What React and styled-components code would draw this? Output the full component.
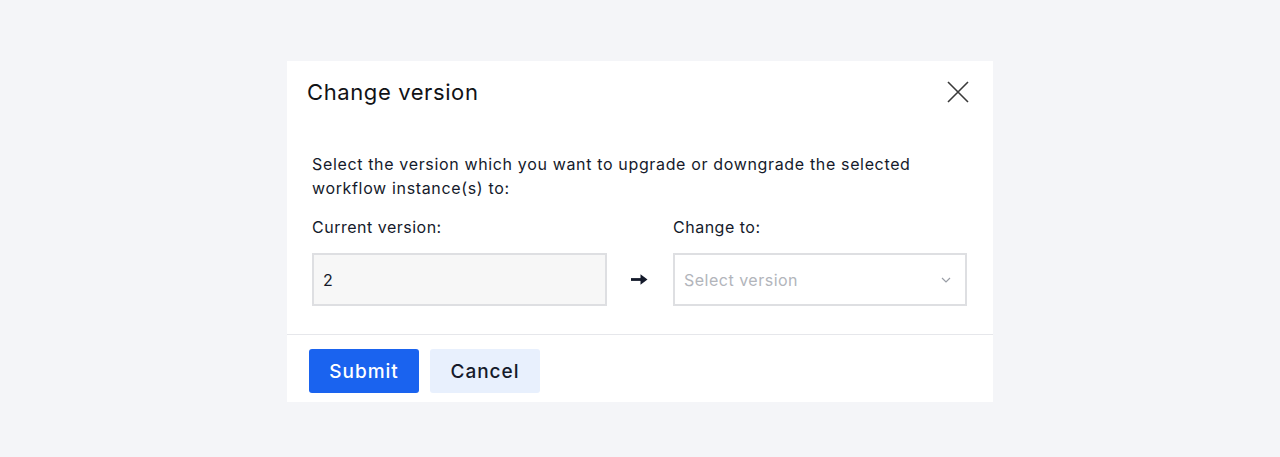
import React from "react";
import styled, { createGlobalStyle } from "styled-components";

const GlobalStyle = createGlobalStyle`
  body {
    margin: 0;
    background: #f4f5f8;
    font-family: "Inter", "Noto Sans", sans-serif;
  }
`;

const App = () => {
  return (
    <Page>
      <GlobalStyle />
      <Modal>
        <Header>
          <Title>Change version</Title>
          <CloseButton aria-label="Close">
            <svg width="22" height="22" viewBox="0 0 22 22">
              <path d="M1 1 L21 21 M21 1 L1 21" stroke="#3a3a3a" strokeWidth="1.6" fill="none" />
            </svg>
          </CloseButton>
        </Header>

        <Body>
          <Intro>
            Select the version which you want to upgrade or downgrade the selected
            workflow instance(s) to:
          </Intro>
          <Fields>
            <Label>Current version:</Label>
            <span />
            <Label>Change to:</Label>

            <Box $filled>2</Box>
            <ArrowCell>
              <svg width="17" height="13" viewBox="0 0 17 13">
                <path d="M0 6.5 H12" stroke="#141a2b" strokeWidth="2.8" />
                <path d="M9.5 1.2 L16.5 6.5 L9.5 11.8 Z" fill="#141a2b" />
              </svg>
            </ArrowCell>
            <Box $placeholder>
              Select version
              <svg width="10" height="6" viewBox="0 0 10 6">
                <path d="M1 1 L5 5 L9 1" stroke="#9a9ea6" strokeWidth="1.2" fill="none" />
              </svg>
            </Box>
          </Fields>
        </Body>

        <Footer>
          <Button $primary>Submit</Button>
          <Button>Cancel</Button>
        </Footer>
      </Modal>
    </Page>
  );
};

const Page = styled.div`
  height: 457px;
  display: flex;
  justify-content: center;
  align-items: flex-start;
  padding-top: 61px;
  box-sizing: border-box;
`;

const Modal = styled.div`
  width: 706px;
  background: #ffffff;
`;

const Header = styled.div`
  display: flex;
  align-items: center;
  justify-content: space-between;
  padding: 15px 24px 0 20px;
`;

const Title = styled.h2`
  margin: 0;
  font-size: 22px;
  line-height: 32px;
  font-weight: 400;
  color: #111216;
  letter-spacing: 0.6px;
`;

const CloseButton = styled.button`
  background: none;
  border: none;
  padding: 0;
  display: flex;
  cursor: pointer;
`;

const Body = styled.div`
  padding: 44px 26px 28px 25px;
  border-bottom: 1px solid #e6e7eb;
`;

const Intro = styled.p`
  margin: 0;
  font-size: 16px;
  line-height: 24px;
  color: #151a2b;
  letter-spacing: 0.65px;
  max-width: 640px;
`;

const Fields = styled.div`
  display: grid;
  grid-template-columns: 295px 66px 1fr;
  row-gap: 14px;
  margin-top: 15px;
`;

const Label = styled.div`
  font-size: 16px;
  line-height: 24px;
  color: #151a2b;
  letter-spacing: 0.5px;
`;

const Box = styled.div`
  height: 53px;
  box-sizing: border-box;
  display: flex;
  align-items: center;
  justify-content: space-between;
  padding: 0 14px 0 9px;
  border: 2px solid #dedfe2;
  background: ${(p) => (p.$filled ? "#f7f7f7" : "#ffffff")};
  color: ${(p) => (p.$placeholder ? "#b2b5bb" : "#151a2b")};
  font-size: 16px;
  letter-spacing: 0.5px;
`;

const ArrowCell = styled.div`
  display: flex;
  align-items: center;
  justify-content: center;
  padding-right: 2px;
`;

const Footer = styled.div`
  display: flex;
  gap: 11px;
  padding: 14px 22px 9px;
`;

const Button = styled.button`
  width: 110px;
  height: 44px;
  border: none;
  border-radius: 3px;
  font-family: inherit;
  font-size: 19px;
  font-weight: 500;
  letter-spacing: 1px;
  background: ${(p) => (p.$primary ? "#1a63ef" : "#e8f0fd")};
  color: ${(p) => (p.$primary ? "#ffffff" : "#151a2a")};
  cursor: pointer;
`;

export default App;
